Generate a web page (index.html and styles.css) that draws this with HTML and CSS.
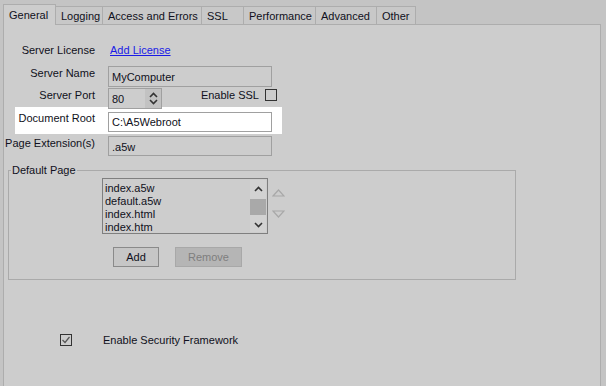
FILE: index.html
```html
<!DOCTYPE html>
<html lang="en-us">
<head>
  <meta charset="UTF-8">
  <title>Server Settings - General</title>
  <link rel="stylesheet" href="styles.css">
</head>
<body>
  <div class="tabs">
    <div class="tab active">General</div>
    <div class="tab">Logging</div>
    <div class="tab">Access and Errors</div>
    <div class="tab">SSL</div>
    <div class="tab">Performance</div>
    <div class="tab">Advanced</div>
    <div class="tab">Other</div>
  </div>

  <div class="panel">
    <div class="row row-license">
      <div class="label">Server License</div>
      <a class="link" href="#">Add License</a>
    </div>
    <div class="row row-name">
      <div class="label">Server Name</div>
      <div class="field">MyComputer</div>
    </div>
    <div class="row row-port">
      <div class="label">Server Port</div>
      <div class="field spin">
        <span>80</span>
        <div class="spin-btns">
          <svg width="9" height="6" viewBox="0 0 9 6"><path d="M1 5 L4.5 1.5 L8 5" fill="none" stroke="#333" stroke-width="1.6"/></svg>
          <svg width="9" height="6" viewBox="0 0 9 6"><path d="M1 1 L4.5 4.5 L8 1" fill="none" stroke="#333" stroke-width="1.6"/></svg>
        </div>
      </div>
      <div class="ssl">
        <span>Enable SSL</span>
        <span class="check"></span>
      </div>
    </div>
    <div class="row row-root">
      <div class="label">Document Root</div>
      <div class="field white">C:\A5Webroot</div>
    </div>
    <div class="row row-ext">
      <div class="label">Page Extension(s)</div>
      <div class="field">.a5w</div>
    </div>

    <fieldset class="group">
      <legend>Default Page</legend>
      <div class="list-line">
        <div class="listbox">
          <ul class="items">
            <li>index.a5w</li>
            <li>default.a5w</li>
            <li>index.html</li>
            <li>index.htm</li>
          </ul>
          <div class="scrollbar">
            <svg width="9" height="6" viewBox="0 0 9 6"><path d="M1 5 L4.5 1.5 L8 5" fill="none" stroke="#333" stroke-width="1.6"/></svg>
            <div class="thumb"></div>
            <svg width="9" height="6" viewBox="0 0 9 6"><path d="M1 1 L4.5 4.5 L8 1" fill="none" stroke="#333" stroke-width="1.6"/></svg>
          </div>
        </div>
        <div class="movers">
          <svg width="13" height="8" viewBox="0 0 13 8"><path d="M1 7 L6.5 1 L12 7 Z" fill="none" stroke="#a8a8a8" stroke-width="1.2"/></svg>
          <svg width="13" height="8" viewBox="0 0 13 8"><path d="M1 1 L6.5 7 L12 1 Z" fill="none" stroke="#a8a8a8" stroke-width="1.2"/></svg>
        </div>
      </div>
      <div class="buttons">
        <button class="btn">Add</button>
        <button class="btn disabled">Remove</button>
      </div>
    </fieldset>

    <div class="security">
      <span class="check checked">
        <svg width="10" height="10" viewBox="0 0 10 10"><path d="M1.5 5 L4 7.5 L8.5 2" fill="none" stroke="#555" stroke-width="1.2"/></svg>
      </span>
      <span>Enable Security Framework</span>
    </div>
  </div>
</body>
</html>
```

FILE: styles.css
```css
body {
  margin: 0;
  background: #c4c4c4;
  font-family: "Liberation Sans", Arial, sans-serif;
  font-size: 11px;
  color: #101020;
  height: 386px;
  overflow: hidden;
}
.tabs {
  display: grid;
  grid-template-columns: 53px 47px 99px 42px 72px 61px 39px;
  align-items: end;
  height: 24px;
  padding-left: 3px;
}
.tab {
  height: 18px;
  line-height: 18px;
  padding: 0 5px;
  box-sizing: border-box;
  border: 1px solid #adadad;
  border-bottom: none;
  border-left: none;
  background: #c8c8c8;
  white-space: nowrap;
  overflow: hidden;
}
.tab.active {
  height: 21px;
  line-height: 20px;
  border-left: 1px solid #adadad;
  background: #cdcdcd;
  margin-bottom: -1px;
  position: relative;
  z-index: 1;
}
.panel {
  margin-left: 3px;
  width: 598px;
  height: 370px;
  box-sizing: border-box;
  background: #cdcdcd;
  border: 1px solid #adadad;
  border-bottom: none;
  overflow: hidden;
}
.row {
  display: flex;
  align-items: flex-start;
  margin-left: 11px;
  width: 262px;
  padding-right: 5px;
}
.label {
  width: 80px;
  flex: none;
  display: flex;
  justify-content: flex-end;
  white-space: nowrap;
  line-height: 14px;
  margin-right: 13px;
}
.row-license {
  margin-top: 16px;
  height: 18px;
}
.row-license .label {
  line-height: 18px;
}
.link {
  color: #1a1ae6;
  line-height: 18px;
  margin-left: 2px;
}
.field {
  width: 164px;
  height: 21px;
  box-sizing: border-box;
  border: 1px solid #a0a0a0;
  background: #cdcdcd;
  padding: 0 3px;
  line-height: 21px;
}
.field.white {
  background: #fff;
  height: 20px;
  line-height: 19px;
}
.row-name {
  margin-top: 7px;
}
.row-port {
  margin-top: 1px;
}
.field.spin {
  width: 54px;
  display: flex;
  justify-content: space-between;
  padding-right: 0;
}
.spin-btns {
  width: 16px;
  background: #c2c2c2;
  display: flex;
  flex-direction: column;
  align-items: center;
  justify-content: space-around;
  padding: 2px 0;
  box-sizing: border-box;
}
.ssl {
  margin-left: auto;
  display: flex;
  align-items: center;
  gap: 6px;
  margin-top: 1px;
}
.check {
  display: inline-block;
  width: 12px;
  height: 12px;
  box-sizing: border-box;
  border: 1px solid #333;
}
.row-root {
  margin-top: -2px;
  padding-top: 5px;
  padding-bottom: 2px;
  background: #fff;
}
.row-root .label {
  line-height: 13px;
}
.row-ext {
  margin-top: 2px;
}
.row-ext .field {
  height: 20px;
  line-height: 20px;
}
.group {
  margin: 8px 0 0 4px;
  width: 508px;
  box-sizing: border-box;
  border: 1px solid #aaa;
  padding: 0 0 12px 0;
}
.group legend {
  margin-left: 2px;
  padding: 0 1px;
  line-height: 13px;
}
.list-line {
  display: flex;
  align-items: flex-start;
  margin: 1px 0 0 93px;
}
.listbox {
  width: 166px;
  height: 56px;
  box-sizing: border-box;
  border: 1px solid #7f7f7f;
  display: flex;
  padding: 1px 1px 1px 2px;
}
.items {
  list-style: none;
  margin: 0;
  padding: 2px 0 0 0;
  flex: 1;
  line-height: 13px;
}
.scrollbar {
  width: 16px;
  background: #d2d2d2;
  display: flex;
  flex-direction: column;
  align-items: center;
  justify-content: space-between;
  padding: 6px 0 4px;
  box-sizing: border-box;
}
.thumb {
  width: 16px;
  height: 16px;
  background: #a9a9a9;
}
.movers {
  display: flex;
  flex-direction: column;
  gap: 13px;
  margin: 11px 0 0 4px;
}
.buttons {
  display: flex;
  gap: 16px;
  margin: 13px 0 0 104px;
}
.btn {
  height: 20px;
  width: 46px;
  border: 1px solid #8a8a8a;
  background: #c6c6c6;
  font-family: "Liberation Sans", Arial, sans-serif;
  font-size: 11px;
  color: #101020;
  padding: 0;
}
.btn.disabled {
  width: 67px;
  background: #b5b5b5;
  border-color: #a8a8a8;
  color: #7e7e7e;
}
.security {
  display: flex;
  align-items: center;
  margin: 54px 0 0 56px;
  gap: 31px;
}
.check.checked {
  display: flex;
  align-items: center;
  justify-content: center;
}
```
